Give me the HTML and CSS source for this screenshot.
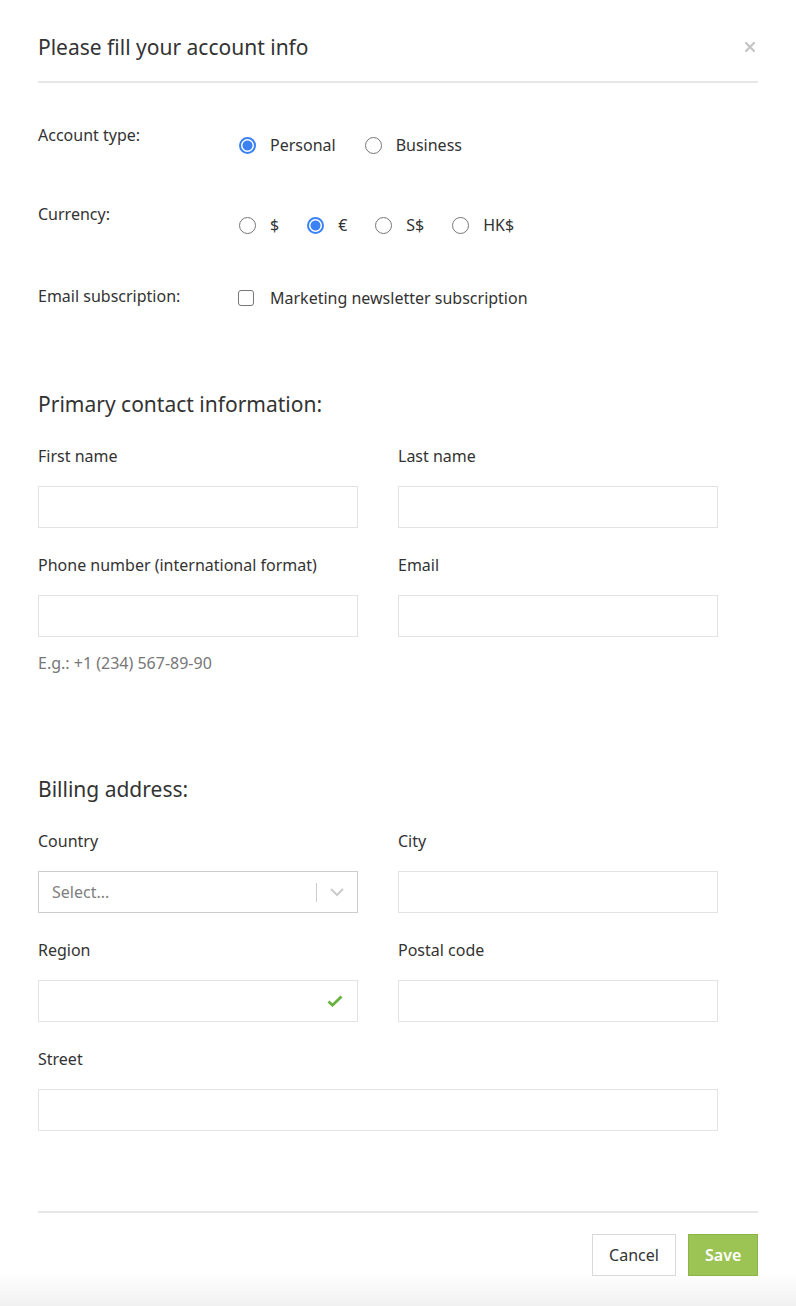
FILE: index.html
```html
<!DOCTYPE html>
<html>
<head>
<meta charset="utf-8">
<link rel="stylesheet" href="styles.css">
</head>
<body>
<div class="modal">
  <div class="header">
    <h1 class="title">Please fill your account info</h1>
    <span class="close"><svg width="10" height="10" viewBox="0 0 10 10"><path d="M1 1L9 9M9 1L1 9" stroke="#c4c4c4" stroke-width="2.2" stroke-linecap="square"/></svg></span>
  </div>

  <div class="opt-row row-account">
    <div class="opt-label">Account type:</div>
    <div class="opts opts-account">
      <label class="opt"><span class="radio checked"></span><span>Personal</span></label>
      <label class="opt"><span class="radio"></span><span>Business</span></label>
    </div>
  </div>

  <div class="opt-row row-currency">
    <div class="opt-label">Currency:</div>
    <div class="opts opts-currency">
      <label class="opt"><span class="radio"></span><span>$</span></label>
      <label class="opt"><span class="radio checked"></span><span>€</span></label>
      <label class="opt"><span class="radio"></span><span>S$</span></label>
      <label class="opt"><span class="radio"></span><span>HK$</span></label>
    </div>
  </div>

  <div class="opt-row row-email">
    <div class="opt-label">Email subscription:</div>
    <div class="opts opts-email">
      <label class="opt"><span class="checkbox"></span><span>Marketing newsletter subscription</span></label>
    </div>
  </div>

  <h2 class="section-title first">Primary contact information:</h2>
  <div class="fields">
    <div class="field">
      <div class="field-label">First name</div>
      <div class="input"></div>
    </div>
    <div class="field">
      <div class="field-label">Last name</div>
      <div class="input"></div>
    </div>
    <div class="field">
      <div class="field-label">Phone number (international format)</div>
      <div class="input"></div>
      <div class="hint">E.g.: +1 (234) 567-89-90</div>
    </div>
    <div class="field">
      <div class="field-label">Email</div>
      <div class="input"></div>
    </div>
  </div>

  <h2 class="section-title second">Billing address:</h2>
  <div class="fields">
    <div class="field">
      <div class="field-label">Country</div>
      <div class="input select">
        <span class="placeholder">Select...</span>
        <span class="select-ind">
          <span class="sep"></span>
          <svg width="16" height="10" viewBox="0 0 16 10"><path d="M2 2L8 8L14 2" fill="none" stroke="#cccccc" stroke-width="2"/></svg>
        </span>
      </div>
    </div>
    <div class="field">
      <div class="field-label">City</div>
      <div class="input"></div>
    </div>
    <div class="field">
      <div class="field-label">Region</div>
      <div class="input valid">
        <svg width="16" height="12" viewBox="0 0 16 12"><path d="M1.5 6.5L5.5 10.2L14.5 1.5" fill="none" stroke="#6ab23e" stroke-width="2.8"/></svg>
      </div>
    </div>
    <div class="field">
      <div class="field-label">Postal code</div>
      <div class="input"></div>
    </div>
    <div class="field wide">
      <div class="field-label">Street</div>
      <div class="input"></div>
    </div>
  </div>

  <div class="footer">
    <button class="btn btn-cancel">Cancel</button>
    <button class="btn btn-save">Save</button>
  </div>
</div>
</body>
</html>
```

FILE: styles.css
```css
html, body {
  margin: 0;
  padding: 0;
}
body {
  font-family: "Noto Sans", "Open Sans", sans-serif;
  color: #333333;
  font-size: 16px;
}
.modal {
  box-sizing: border-box;
  min-height: 1306px;
  padding: 0 38px 0 38px;
  background: linear-gradient(to bottom, #ffffff calc(100% - 34px), #f1f1f1 100%);
}
.header {
  display: flex;
  align-items: center;
  justify-content: space-between;
  padding-top: 31px;
  padding-bottom: 18px;
  border-bottom: 2px solid #e6e6e6;
}
.title {
  margin: 0;
  font-size: 21px;
  font-weight: 400;
  line-height: 32px;
  color: #333;
}
.close {
  display: flex;
  margin-right: 3px;
}
.opt-row {
  display: grid;
  grid-template-columns: 200px 1fr;
}
.row-account { margin-top: 41px; }
.row-currency { margin-top: 47px; }
.row-email { margin-top: 49px; }
.opt-label {
  line-height: 22px;
  font-size: 16px;
}
.opts {
  display: flex;
  line-height: 22px;
  font-size: 16px;
}
.opts-account { padding-top: 10px; gap: 28px; }
.opts-currency { padding-top: 11px; gap: 27px; }
.opts-email { padding-top: 2px; }
.opt {
  display: flex;
  align-items: center;
  gap: 14px;
}
.radio {
  box-sizing: border-box;
  width: 17px;
  height: 17px;
  border-radius: 50%;
  border: 1px solid #767676;
  margin-left: 1px;
  background: #fff;
  flex: none;
}
.radio.checked {
  border: 2px solid #3b82f6;
  background: radial-gradient(circle, #3b82f6 0 4.6px, #ffffff 5.4px);
}
.checkbox {
  box-sizing: border-box;
  width: 16px;
  height: 16px;
  border: 1px solid #767676;
  border-radius: 3px;
  flex: none;
  margin-right: 2px;
}
.section-title {
  margin: 0;
  font-size: 21px;
  font-weight: 400;
  line-height: 30px;
  color: #333;
}
.section-title.first { margin-top: 80px; }
.section-title.second { margin-top: 100px; }
.fields {
  display: grid;
  grid-template-columns: 320px 320px;
  column-gap: 40px;
  row-gap: 26px;
  margin-top: 26px;
}
.field.wide { grid-column: 1 / 3; }
.field-label {
  line-height: 22px;
  font-size: 16px;
  margin-bottom: 19px;
}
.input {
  box-sizing: border-box;
  height: 42px;
  border: 1px solid #e3e3e3;
  background: #fff;
  display: flex;
  align-items: center;
}
.input.select {
  border-color: #cccccc;
  justify-content: space-between;
}
.placeholder {
  color: #808080;
  padding-left: 13px;
  font-size: 16px;
}
.select-ind {
  display: flex;
  align-items: center;
  gap: 12px;
  padding-right: 12px;
}
.sep {
  width: 1px;
  height: 19px;
  background: #cccccc;
}
.input.valid {
  justify-content: flex-end;
  padding-right: 14px;
}
.hint {
  margin-top: 15px;
  font-size: 16px;
  line-height: 22px;
  color: #777777;
}
.footer {
  margin-top: 80px;
  border-top: 2px solid #e6e6e6;
  padding-top: 21px;
  display: flex;
  justify-content: flex-end;
  gap: 12px;
}
.btn {
  font-family: "Noto Sans", "Open Sans", sans-serif;
  font-size: 16px;
  height: 42px;
  padding: 0 16px;
  cursor: pointer;
}
.btn-cancel {
  background: #fff;
  border: 1px solid #d9d9d9;
  color: #333;
  width: 84px;
}
.btn-save {
  background: #9bc455;
  border: 1px solid #8cb449;
  color: #fff;
  font-weight: 600;
  width: 70px;
}
```
